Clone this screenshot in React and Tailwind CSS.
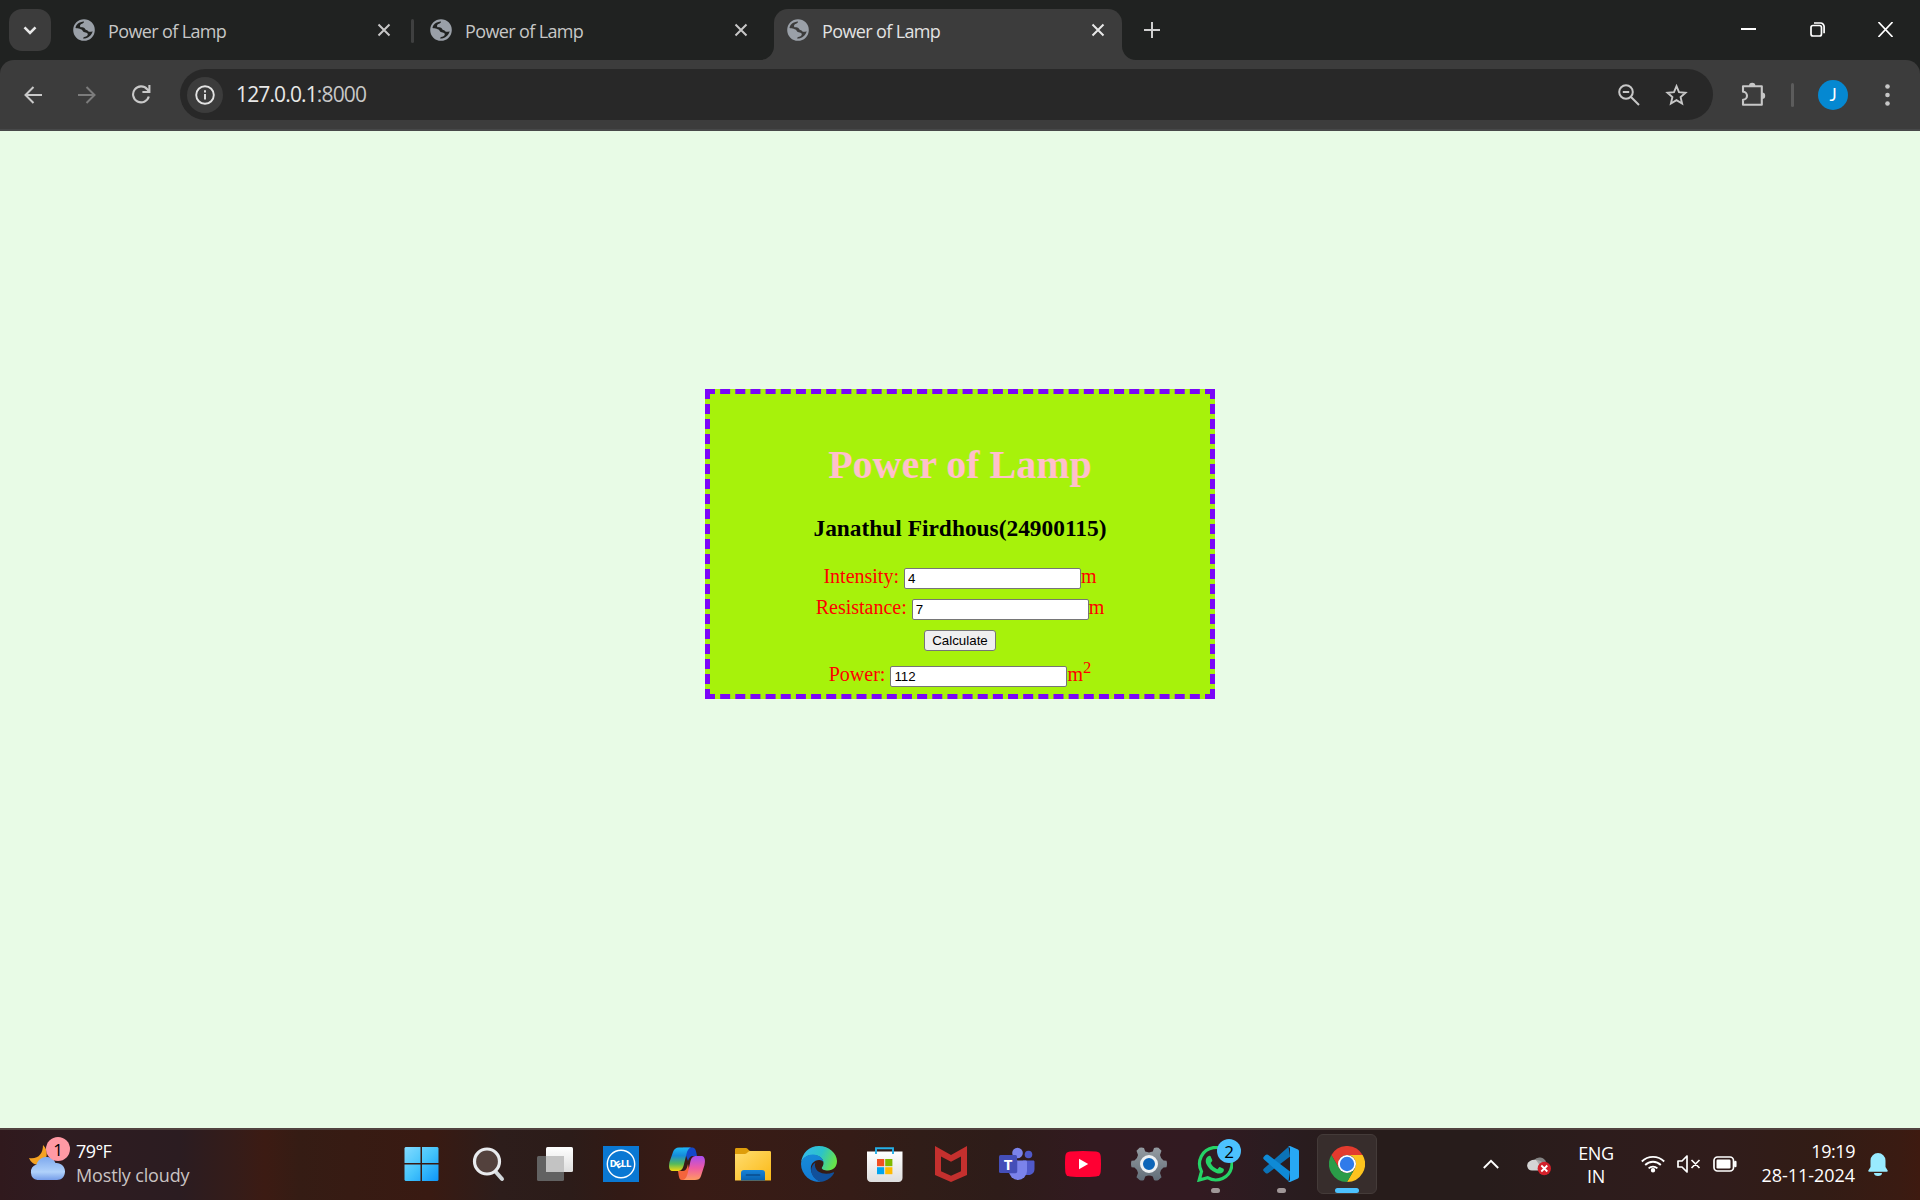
function Globe({ className = "" }) {
  return (
    <svg className={"shrink-0 " + className} width="22" height="22" viewBox="0 0 22 22">
      <path
        fill="#9aa0a8"
        fillRule="evenodd"
        d="M11 .2a10.800 10.800 0 1 0 0 21.600a10.800 10.800 0 1 0 0-21.600zM2.500 9C3 5.500 6 2.800 11 2.500C11.400 4.600 7 4.600 7 7C7 9.400 11.600 7.600 12 9.800C12.200 11.400 14.200 10.600 15 12C15.800 13.200 18 13 19.600 12.200C18.800 16 15.500 19.500 10.200 19.600C9.400 17.400 14.600 18 14.800 15.400C14.800 12.800 10.600 14 9.600 11.800C8.800 9.800 5 9.400 2.500 9Z"
      />
    </svg>
  );
}

function Close({ color }) {
  return (
    <svg className="shrink-0" width="14" height="14" viewBox="0 0 14 14" fill="none" stroke={color} strokeWidth="2">
      <path d="M1.500 1.500l11 11M12.500 1.500l-11 11" />
    </svg>
  );
}

function Tab({ active, divider }) {
  return (
    <div className={"relative mr-[9px] flex h-[51px] w-[348px] shrink-0 items-start " + (active ? "rounded-t-[14px] bg-[#3c3c3c]" : "")}>
      {active && (
        <>
          <svg className="absolute -left-[14px] bottom-0" width="14" height="14">
            <path d="M14 0v14H0A14 14 0 0 0 14 0Z" fill="#3c3c3c" />
          </svg>
          <svg className="absolute -right-[14px] bottom-0" width="14" height="14">
            <path d="M0 0v14h14A14 14 0 0 1 0 0Z" fill="#3c3c3c" />
          </svg>
        </>
      )}
      <Globe className="mt-[10px] ml-[13px]" />
      <span className={"mt-[10px] ml-[13px] w-[260px] text-[18px] leading-6 tracking-[-0.63px] whitespace-nowrap " + (active ? "text-[#e3e3e3]" : "text-[#c7c7c7]")}>
        Power of Lamp
      </span>
      <div className="mt-[14px] ml-[9px]">
        <Close color={active ? "#e8e8e8" : "#c7c7c7"} />
      </div>
      {divider && <div className="absolute top-[10px] -right-[6px] h-6 w-[3px] rounded bg-[#3f4040]" />}
    </div>
  );
}

function TabStrip() {
  return (
    <div className="flex h-[60px] bg-[#202221] pt-[9px] pl-[9px]">
      <div className="mr-[9px] flex size-[42px] shrink-0 items-center justify-center rounded-[13px] bg-[#3c3c3c]">
        <svg width="14" height="9" viewBox="0 0 14 9" fill="none" stroke="#e8e8e8" strokeWidth="2.600">
          <path d="M1.500 1.300L7 6.800l5.500-5.500" />
        </svg>
      </div>
      <Tab divider />
      <Tab />
      <Tab active />
      <svg className="mt-[13px] ml-[13px]" width="16" height="16" stroke="#d0d0d0" strokeWidth="2">
        <path d="M8 0v16M0 8h16" />
      </svg>
      <div className="mt-[13px] mr-[27px] ml-auto flex gap-[53.500px] text-white">
        <svg width="15" height="15" stroke="white" strokeWidth="2">
          <path d="M0 7h15" />
        </svg>
        <svg width="15" height="15" fill="none" stroke="white" strokeWidth="1.700">
          <rect x="1" y="3.500" width="10.500" height="10.500" rx="2" />
          <path d="M4 1h6.500a3.600 3.600 0 0 1 3.600 3.600v6.600" />
        </svg>
        <svg width="15" height="15" stroke="white" strokeWidth="1.700">
          <path d="M.4 0l14.200 15M14.600 0L.4 15" />
        </svg>
      </div>
    </div>
  );
}

function Toolbar() {
  return (
    <div className="bg-[#202221]">
      <div className="flex h-[71px] items-center rounded-t-[14px] border-b-2 border-[#474849] bg-[#3c3c3c] pl-6">
        <svg className="shrink-0" width="18" height="18" fill="none" stroke="#c9c9c9" strokeWidth="2">
          <path d="M18 9H2M9.500 1L1.500 9l8 8" />
        </svg>
        <svg className="ml-9 shrink-0" width="18" height="18" fill="none" stroke="#7c7c7c" strokeWidth="2">
          <path d="M0 9h16M8.500 1l8 8-8 8" />
        </svg>
        <svg className="ml-9 shrink-0" width="19" height="19" fill="none" stroke="#c9c9c9" strokeWidth="2.100">
          <path d="M16.800 11.500A8 8 0 1 1 15.200 4.200L17 6.500M17.400 0v7h-7" />
        </svg>
        <div className="ml-[29px] flex h-[51px] w-[1533px] shrink-0 items-center rounded-full bg-[#282828] pr-[25px] pl-[7px]">
          <div className="flex size-[36px] items-center justify-center rounded-full bg-[#3c3c3c]">
            <svg width="20" height="20" fill="none" stroke="#e3e3e3" strokeWidth="1.900">
              <circle cx="10" cy="10" r="8.800" />
              <path d="M10 9v5.500M10 5.200v2.200" />
            </svg>
          </div>
          <span className="ml-[13px] text-[21px] tracking-[-0.86px] text-[#e8e8e8]">
            127.0.0.1<span className="text-[#c7c7c7]">:8000</span>
          </span>
          <svg className="ml-auto" width="22" height="22" fill="none" stroke="#c7c7c7" strokeWidth="2">
            <circle cx="8" cy="8" r="6.800" />
            <path d="M13 13l8 8M4.800 8h6.400" />
          </svg>
          <svg className="ml-[25px]" width="23" height="22" viewBox="0 0 23 22" fill="none" stroke="#c7c7c7" strokeWidth="1.900">
            <path d="M11.500 2.200l2.500 6 6.500.6-4.900 4.300 1.500 6.400-5.600-3.400-5.600 3.400 1.500-6.400-4.900-4.300 6.500-.6z" />
          </svg>
        </div>
        <svg className="ml-[28px] shrink-0" width="26" height="25" viewBox="0 0 26 25">
          <path d="M2 4.200h18.800v18.500H2v-5a3.900 3.900 0 0 0 0-8z" fill="none" stroke="#c7c7c7" strokeWidth="2.100" strokeLinejoin="round" />
          <path d="M8 4a3 3 0 0 1 6.400 0zM21 10.500a3 3 0 0 1 0 6.400z" fill="#c7c7c7" />
        </svg>
        <div className="ml-6 h-6 w-[3px] rounded-sm bg-[#5c5c5c]" />
        <div className="ml-6 flex size-[30px] items-center justify-center rounded-full bg-[#0588d1] font-['Lato',sans-serif] text-[17px] text-white">J</div>
        <svg className="ml-[36.500px]" width="5" height="22" fill="#c7c7c7">
          <circle cx="2.500" cy="2.500" r="2.300" />
          <circle cx="2.500" cy="11" r="2.300" />
          <circle cx="2.500" cy="19.500" r="2.300" />
        </svg>
      </div>
    </div>
  );
}

function Field({ label, value, unit, className }) {
  return (
    <div className={"flex h-[21px] items-center justify-center text-[20px] leading-[21px] text-[#ff0000] " + className}>
      <span className="mr-[5px] -translate-y-[2px]">{label}</span>
      <input
        defaultValue={value}
        className="h-[21px] w-[177px] rounded-[2px] border border-[#767676] bg-white px-[3px] font-['Liberation_Sans',Arial,sans-serif] text-[13.333px] text-black outline-none"
      />
      <span className="-translate-y-[2px]">{unit}</span>
    </div>
  );
}

function Page() {
  return (
    <main className="h-[997px] bg-[#e8fbe6] pt-[258px] font-['Liberation_Serif','Times_New_Roman',serif]">
      <div className="mx-auto h-[310px] w-[510px] border-[5px] border-dashed border-[#7b05f7] bg-[#a7f20b] text-center">
        <h1 className="mt-[48px] text-[40px] leading-[46px] font-bold text-[#ffc0cb]">Power of Lamp</h1>
        <h3 className="mt-[27px] text-[23.400px] leading-[27px] font-bold text-black">Janathul Firdhous(24900115)</h3>
        <Field className="mt-[26px]" label="Intensity:" value="4" unit="m" />
        <Field className="mt-[10px]" label="Resistance:" value="7" unit="m" />
        <button className="mx-auto mt-[10px] flex h-[21px] w-[72px] items-center justify-center rounded-[3px] border border-[#767676] bg-[#efefef] font-['Liberation_Sans',Arial,sans-serif] text-[13.333px] text-black">
          Calculate
        </button>
        <Field
          className="mt-[15px]"
          label="Power:"
          value="112"
          unit={<>m<sup className="-top-[8px] text-[16.600px]">2</sup></>}
        />
      </div>
    </main>
  );
}

const Windows = () => (
  <svg className="-translate-x-[1.500px]" width="36" height="36" viewBox="0 0 36 36">
    <defs>
      <linearGradient id="win" gradientUnits="userSpaceOnUse" x1="0" y1="0" x2="36" y2="36">
        <stop stopColor="#86dcff" />
        <stop offset=".5" stopColor="#45c4fb" />
        <stop offset="1" stopColor="#0a93f8" />
      </linearGradient>
    </defs>
    <path fill="url(#win)" d="M2 1h15v16H1V2zM18.500 1H34l1 1v15H18.500zM1 18.500h16V35H2l-1-1zM18.500 18.500H35V34l-1 1H18.500z" />
  </svg>
);

const Search = () => (
  <svg width="36" height="36" viewBox="0 0 36 36" fill="none">
    <path d="M24 25l7 8" stroke="#d3d8dc" strokeWidth="4" strokeLinecap="round" />
    <circle cx="16" cy="15.500" r="12.500" fill="#53413d" stroke="#e9ebee" strokeWidth="3.200" />
  </svg>
);

const TaskView = () => (
  <svg width="36" height="36" viewBox="0 0 36 36">
    <defs>
      <linearGradient id="tv" x1="0" y1="0" x2="0" y2="1">
        <stop stopColor="#fff" />
        <stop offset="1" stopColor="#dedede" />
      </linearGradient>
    </defs>
    <rect x="0" y="10" width="27" height="25" rx="1.500" fill="#626262" />
    <rect x="9" y="1" width="27" height="25" rx="1.500" fill="url(#tv)" />
    <rect x="9" y="10" width="18" height="16" fill="#c3c3c3" />
  </svg>
);

const Dell = () => (
  <svg width="36" height="36" viewBox="0 0 36 36">
    <rect width="36" height="36" fill="#0a78d3" />
    <circle cx="18" cy="18" r="13.700" fill="none" stroke="#fff" strokeWidth="1.400" />
    <g fill="#fff" fontFamily="Inter, sans-serif" fontWeight="800" fontSize="9">
      <text x="7" y="21.300">D</text>
      <text x="12.600" y="21.600" transform="rotate(-32 16 18)">E</text>
      <text x="18.300" y="21.300">L</text>
      <text x="23.200" y="21.300">L</text>
    </g>
  </svg>
);

const Copilot = () => (
  <svg width="36" height="36" viewBox="0 0 36 36">
    <defs>
      <linearGradient id="cpa" x1="0" y1="0" x2="0" y2="1">
        <stop stopColor="#1fb8f5" />
        <stop offset=".35" stopColor="#168bd8" />
        <stop offset=".7" stopColor="#56ba5a" />
        <stop offset="1" stopColor="#f4d90f" />
      </linearGradient>
      <linearGradient id="cpb" x1="0" y1="0" x2="0" y2="1">
        <stop stopColor="#a94df0" />
        <stop offset=".5" stopColor="#ee5aa4" />
        <stop offset="1" stopColor="#ff9a60" />
      </linearGradient>
    </defs>
    <path fill="#1448c9" d="M14 1.500h9c3 0 4 2 5 8.500h-4c-3 0-4 2-5 5z" />
    <path fill="#f4643c" d="M22 34h-9c-3 0-3-3-4-9h5c3 0 4-3 5-7z" />
    <path fill="url(#cpa)" d="M10 1.500h12c-3 1-4 4-5 8.500l-2.500 10c-1.200 4-3 5-6 5H4c-4 0-4.500-4-3.500-9L4 6c1-3 3-4.500 6-4.500z" />
    <path fill="url(#cpb)" d="M26 34H14c3-1 4-4 5-8l2.500-11c1.200-4 3-5 6-5H32c4 0 4.500 4 3.500 9L32 30c-1 3-3 4-6 4z" />
  </svg>
);

const Folder = () => (
  <svg width="36" height="36" viewBox="0 0 36 36">
    <defs>
      <linearGradient id="fd" x1="0" y1="0" x2="1" y2="1">
        <stop stopColor="#ffdd70" />
        <stop offset="1" stopColor="#fbb916" />
      </linearGradient>
      <linearGradient id="fdb" x1="0" y1="0" x2="0" y2="1">
        <stop stopColor="#1683d8" />
        <stop offset="1" stopColor="#0961ae" />
      </linearGradient>
    </defs>
    <path fill="#de9d0b" d="M0 3.500C0 2.500.5 2 1.500 2h9.500c2 0 2.500 3 4.500 3v4H0z" />
    <path fill="url(#fd)" d="M0 8h10c2 0 3-3 5-3h19.500c1 0 1.500.5 1.500 1.500V34.500H0z" />
    <path fill="url(#fdb)" d="M6 34.500V27c0-2 1-3 3-3h18c2 0 3 1 3 3v7.500z" />
    <path stroke="#0a4c8d" strokeWidth="1.700" strokeLinecap="round" d="M11.500 29h13" />
  </svg>
);

const Edge = () => (
  <svg width="36" height="36" viewBox="0 0 36 36">
    <defs>
      <linearGradient id="ega" x1="0" y1=".2" x2="1" y2=".5">
        <stop stopColor="#35b8ef" />
        <stop offset=".55" stopColor="#2cc3c8" />
        <stop offset="1" stopColor="#67e449" />
      </linearGradient>
      <linearGradient id="egb" x1=".3" y1="0" x2=".6" y2="1">
        <stop stopColor="#168ad8" />
        <stop offset="1" stopColor="#1279d3" />
      </linearGradient>
    </defs>
    <path fill="url(#ega)" d="M0 17C1 7 8 0 18 0s18 7.500 18 15c0 6-4 9.500-9 9.500-4 0-6.500-1.500-6.200-2.800C21.500 20.500 22.500 19.500 22.500 17c0-4-4-8-10.500-8C6 9 1.500 12.500 0 17z" />
    <path fill="url(#egb)" d="M0 18c0-5 5-9.500 12-9.500 6 0 10 4 10.500 7.500-1-1.500-3-2.200-4.500-2C12 14.500 9 19 10 24c1 6 6 11 11 11.600A18 18 0 0 1 0 18z" />
    <path fill="#11509b" d="M14.500 16.500C9 20 9 27 13 31.500c3 3.500 7 4.800 10 3.800 5-1.600 8.500-5 10-8 .4-.8-.3-1.200-1-.8C24 29.500 15 27 14 20c-.2-1.300 0-2.500.5-3.500z" />
  </svg>
);

const Store = () => (
  <svg width="36" height="36" viewBox="0 0 36 36">
    <defs>
      <linearGradient id="st" x1="0" y1="0" x2="0" y2="1">
        <stop stopColor="#fff" />
        <stop offset="1" stopColor="#dedede" />
      </linearGradient>
    </defs>
    <path fill="url(#st)" d="M0 5.500h35.500V32c0 2-1.500 4-4 4H4c-2.500 0-4-2-4-4z" />
    <path fill="none" stroke="#25b0e8" strokeWidth="1.900" d="M9 8V2.200h17V8" />
    <path fill="#f25022" d="M10 13h7.200v7.200H10z" />
    <path fill="#7fba00" d="M18.200 13h7.200v7.200h-7.200z" />
    <path fill="#00a4ef" d="M10 21.200h7.200v7H10z" />
    <path fill="#ffb900" d="M18.200 21.200h7.200v7h-7.200z" />
  </svg>
);

const McAfee = () => (
  <svg width="36" height="36" viewBox="0 0 36 36">
    <path fill="#c4302e" fillRule="evenodd" d="M2 0l16 9L34 0v29l-16 7-16-7zM8 10.500v14.800l10 4.500 10-4.500V10.500l-10 5.300z" />
  </svg>
);

const Teams = () => (
  <svg width="36" height="36" viewBox="0 0 36 36">
    <circle cx="29.500" cy="8.500" r="3.800" fill="#5059c9" />
    <path fill="#5059c9" d="M24 14.500h10c1 0 1.500.5 1.500 1.500v7c0 3.500-2.500 6-6 6h-3z" />
    <circle cx="18.500" cy="7" r="5.300" fill="#7b83eb" />
    <path fill="#7b83eb" d="M10 14.500h16.500c1 0 1.500.5 1.500 1.500v9a9 9 0 0 1-18 0z" />
    <path fill="#6169cf" d="M10 14.500h8.500V25c0 1.500-1 2.500-2.500 2.500h-5.500z" />
    <rect x="0" y="9" width="18" height="18" rx="1.500" fill="#444eb8" />
    <text x="9" y="23.500" textAnchor="middle" fill="#fff" fontFamily="Open Sans, sans-serif" fontWeight="700" fontSize="15">T</text>
  </svg>
);

const YouTube = () => (
  <svg width="36" height="36" viewBox="0 0 36 36">
    <path fill="#ff0033" d="M5 5.600q13-1 26 0c3 .3 4.400 1.800 4.700 4.500q.6 8 0 15.800c-.3 2.700-1.700 4.200-4.700 4.500q-13 1-26 0C2 30.100.6 28.600.3 25.900q-.6-8 0-15.800C.6 7.400 2 5.900 5 5.600z" />
    <path fill="#fff" d="M14 12.700v10.600l9.200-5.300z" />
  </svg>
);

const Settings = () => (
  <svg width="36" height="36" viewBox="0 0 36 36">
    <defs>
      <linearGradient id="gear" x1="0" y1="0" x2="0" y2="1">
        <stop stopColor="#949ba1" />
        <stop offset="1" stopColor="#626e79" />
      </linearGradient>
    </defs>
    <path fill="url(#gear)" d="M8.500 1.800Q11 1 13 2l1.200 3.600q3.800 1.600 7.600 0L23 2q2-1 4.500-.2l3 3L29 9q.5 3.500 3.500 5.500l3 .3q1 3.200 0 6.400l-3 .3Q29.500 23.500 29 27l1.500 4.200-3 2.800Q25 35 23 34l-1.200-3.600q-3.800-1.600-7.600 0L13 34q-2 1-4.500 0l-3-2.800L7 27q-.5-3.500-3.500-5.500l-3-.3q-1-3.200 0-6.400l3-.3Q6.500 12.500 7 9L5.500 4.800z" />
    <circle cx="18" cy="18" r="7.500" fill="#0d65b8" stroke="#edf0f2" strokeWidth="3" />
  </svg>
);

const WhatsApp = () => (
  <div className="relative">
    <svg width="36" height="36" viewBox="0 0 36 36">
      <path fill="none" stroke="#25d366" strokeWidth="3.200" d="M2.200 34l2.300-8.600A16.200 16.200 0 1 1 10.600 31.700z" />
      <path fill="#25d366" d="M12.500 9.700c.7 0 1 .3 1.300 1l1.500 3.500c.3.8-1.400 2.300-1.600 2.900 1.200 2.900 3.800 4.900 6.600 6.100.8 0 1.700-2.300 2.500-2.200l3.700 1.700c.8.5.3 2.700-.6 3.600-1.700 1.600-4.500 1.500-6.600.7-5-1.900-8-5.200-9.900-9-1.300-3-.7-7.500 3.100-8.300z" />
    </svg>
    <div className="absolute -top-[7px] left-[20px] flex size-6 items-center justify-center rounded-full bg-[#4cc2ff] text-[17px] leading-none text-black">2</div>
  </div>
);

const VSCode = () => (
  <svg width="36" height="36" viewBox="0 0 36 36">
    <path fill="#0b73b8" d="M1 22.500L25.500.8 27 10.500 5 27.200q-1.300.7-2.500-.2L.8 25.300Q-.5 23.800 1 22.500z" />
    <path fill="#0f8ad6" d="M1 13.500L25.500 35.200 27 25.500 5 8.800Q3.700 8.100 2.500 9L.8 10.700Q-.5 12.200 1 13.500z" />
    <path fill="#27a8f4" d="M27 0l8 3.500q1 .5 1 1.700v25.600q0 1.200-1 1.700L27 36q-1.200 0-2-1 2 .5 2-1.500v-31Q27 .5 25 1q1-1 2-1z" />
  </svg>
);

const Chrome = () => (
  <svg width="36" height="36" viewBox="0 0 36 36">
    <path fill="#e33b2e" d="M2.400 9A18 18 0 0 1 33.600 9H18a9 9 0 0 0-7.800 4.500L10.200 22.500z" />
    <path fill="#fcc31e" d="M33.600 9A18 18 0 0 1 18 36l7.800-13.500A9 9 0 0 0 18 9z" />
    <path fill="#2a9c48" d="M2.400 9l7.800 13.500A9 9 0 0 0 25.800 22.500L18 36A18 18 0 0 1 2.400 9z" />
    <circle cx="18" cy="18" r="9" fill="#fff" />
    <circle cx="18" cy="18" r="7.200" fill="#2f7bea" />
  </svg>
);

const apps = [
  { Icon: Windows }, { Icon: Search }, { Icon: TaskView }, { Icon: Dell }, { Icon: Copilot },
  { Icon: Folder }, { Icon: Edge }, { Icon: Store }, { Icon: McAfee }, { Icon: Teams },
  { Icon: YouTube }, { Icon: Settings }, { Icon: WhatsApp, open: true }, { Icon: VSCode, open: true },
  { Icon: Chrome, active: true },
];

function Weather() {
  return (
    <div className="flex w-[390px] shrink-0 pl-[29px]">
      <div className="relative mt-[15px] h-[44px] w-9">
        <svg width="36" height="44" viewBox="0 0 36 44">
          <defs>
            <linearGradient id="cloud" x1="0" y1="0" x2="0" y2="1">
              <stop stopColor="#7ea9ee" />
              <stop offset=".65" stopColor="#b0d1fa" />
              <stop offset="1" stopColor="#759de9" />
            </linearGradient>
          </defs>
          <path fill="#f4a222" d="M14 0c6 5 5 17-4 19.500C6 20 2 18 0 13c9 1.500 14-4 14-13z" />
          <path fill="url(#cloud)" d="M8.500 35a8 8 0 0 1-1-15.500C9 14.500 13 12 17.500 12S25 14.500 26.500 18c5.500-.5 9.500 3.500 9.500 8.500S32.500 35 28 35z" />
        </svg>
        <div className="absolute -top-[8px] left-[17px] flex size-6 items-center justify-center rounded-full bg-[#ff99a4] text-[17px] leading-none text-black">1</div>
      </div>
      <div className="mt-[9px] ml-[11px] text-[18px] leading-6 whitespace-nowrap">
        <div className="tracking-[-0.6px] text-white">79°F</div>
        <div className="tracking-[-0.15px] text-[#c9c3c3]">Mostly cloudy</div>
      </div>
    </div>
  );
}

function Tray() {
  return (
    <div className="mr-8 ml-auto flex h-full text-[18px] leading-6 text-white">
      <svg className="mt-[29px]" width="16" height="10" fill="none" stroke="white" strokeWidth="1.900">
        <path d="M.8 9L8 1.800 15.200 9" />
      </svg>
      <svg className="mt-[25px] ml-7" width="24" height="22" viewBox="0 0 24 22">
        <path fill="#858585" d="M7 5a7 7 0 0 1 12 2L10 14z" />
        <path fill="#d4d4d4" d="M5 15.500A5 5 0 0 1 3 6c4-2.500 8-1 10 2l-1 7.500z" />
        <path fill="#a8a8a8" d="M9 5c5 0 7 3 10 4l-5 3z" />
        <circle cx="17.300" cy="13.500" r="6.700" fill="#d3202a" />
        <path stroke="white" strokeWidth="1.800" d="M14.300 10.500l6 6M20.300 10.500l-6 6" />
      </svg>
      <div className="mt-[12px] ml-[27px] w-9 text-center leading-[23px] tracking-[-0.3px]">
        <div>ENG</div>
        <div>IN</div>
      </div>
      <svg className="mt-[25px] ml-[27px]" width="24" height="18" fill="none" stroke="white" strokeWidth="1.800">
        <path d="M.8 6.500a16 16 0 0 1 22.400 0M4.200 10a11 11 0 0 1 15.600 0M7.600 13.400a6.300 6.300 0 0 1 8.800 0" />
        <circle cx="12" cy="15.300" r="1.300" fill="white" />
      </svg>
      <svg className="mt-[25px] ml-3" width="24" height="18" fill="none" stroke="white" strokeWidth="1.700" strokeLinejoin="round">
        <path d="M1 6h4l5-5v16l-5-5H1zM14.500 5l8 8M22.500 5l-8 8" />
      </svg>
      <svg className="mt-[26px] ml-3" width="25" height="16" fill="none" stroke="white" strokeWidth="1.700">
        <rect x="1" y="1" width="19.500" height="14" rx="3.500" />
        <rect x="3.500" y="3.500" width="14" height="9" rx="1.200" fill="white" stroke="none" />
        <path strokeWidth="2.500" strokeLinecap="round" d="M22.300 6v4" />
      </svg>
      <div className="mt-[9px] ml-[21px] w-[96px] text-right whitespace-nowrap">
        <div className="tracking-[-0.450px]">19:19</div>
        <div className="tracking-[-0.050px]">28-11-2024</div>
      </div>
      <svg className="mt-[23px] ml-[13px]" width="20" height="23" fill="#99ebff">
        <path d="M10 0a7.500 7.500 0 0 1 7.500 7.500V14l2.200 3.500q.3 1.200-1 1.200H1.300q-1.300 0-1-1.200L2.500 14V7.500A7.500 7.500 0 0 1 10 0zM6 20h8a4 3 0 0 1-8 0z" />
      </svg>
    </div>
  );
}

function Taskbar() {
  return (
    <footer className="flex h-[72px] border-t-2 border-[#51423f] bg-[linear-gradient(90deg,#30191d_0px,#2f1c21_60px,#2b1c21_180px,#351c19_235px,#3c1b13_265px,#351c14_300px,#371b13_350px,#391a12_430px,#2d1d1b_500px,#2c1c19_570px,#321a15_620px,#391b15_690px,#351c17_850px,#301d18_920px,#2e1c19_1000px,#321a20_1090px,#321a21_1200px,#2a1c20_1280px,#271c1b_1350px,#271c1b_1480px,#2d1c1c_1600px,#301c1b_1720px,#321c15_1820px,#3a1b12_1900px,#3e1a10_1920px)]">
      <Weather />
      {apps.map(({ Icon, open, active }, i) => (
        <div key={i} className="relative flex w-[66px] shrink-0 justify-center">
          <div className={"mt-1 flex size-[60px] justify-center rounded-md " + (active ? "border border-[#443b39] bg-[#372d2c] pt-[11px]" : "pt-3")}>
            <Icon />
          </div>
          {open && <div className="absolute bottom-[7px] h-[5px] w-[9px] rounded-full bg-[#a09798]" />}
          {active && <div className="absolute bottom-[7px] h-[5px] w-6 rounded-full bg-[#4cc2ff]" />}
        </div>
      ))}
      <Tray />
    </footer>
  );
}

export default function App() {
  return (
    <div className="h-[1200px] w-[1920px] overflow-hidden font-['Open_Sans','Noto_Sans',sans-serif]">
      <TabStrip />
      <Toolbar />
      <Page />
      <Taskbar />
    </div>
  );
}
